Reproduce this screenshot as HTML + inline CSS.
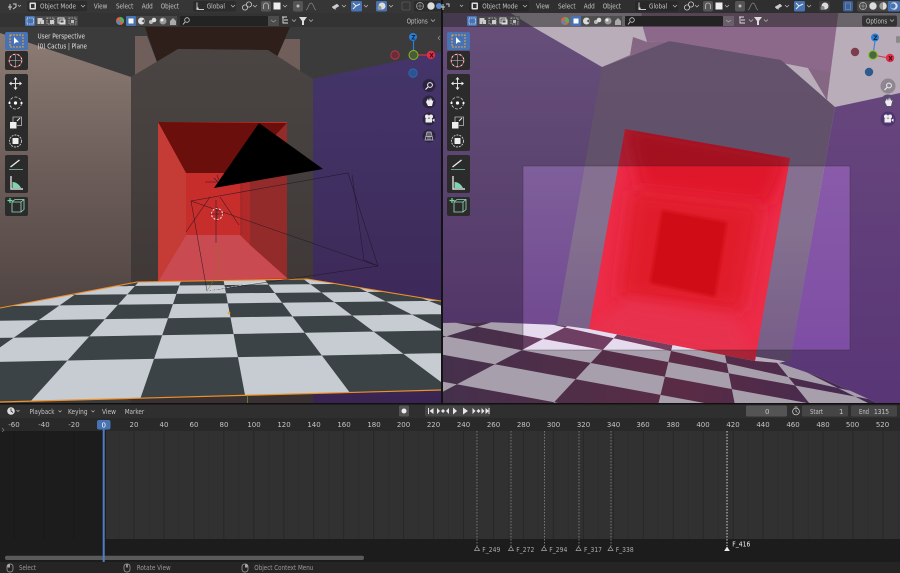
<!DOCTYPE html>
<html lang="en"><head><meta charset="utf-8"><title>Blender</title>
<style>html,body{margin:0;padding:0;background:#222;width:900px;height:573px;overflow:hidden}svg{display:block;filter:blur(.35px)}
text{font-family:"DejaVu Sans","Liberation Sans",sans-serif;font-size:7px;fill:#c4c4c4}</style></head><body>
<svg width="900" height="573" viewBox="0 0 900 573" xmlns="http://www.w3.org/2000/svg">
<defs>
<clipPath id="lv"><rect x="0" y="0" width="441" height="403"/></clipPath>
<clipPath id="rv"><rect x="443" y="0" width="457" height="403"/></clipPath>
<clipPath id="lf"><polygon points="0,308 137,282 307,279 441,301 441,390 0,402"/></clipPath>
<clipPath id="rf"><polygon points="443,323 485,322 559,325 589,329 755,361 779,363 820,377 877,403 443,403"/></clipPath>
<clipPath id="rq"><polygon points="625,129 790,158 755,361 589,329"/></clipPath>
<filter id="b8" x="-40%" y="-40%" width="180%" height="180%"><feGaussianBlur stdDeviation="9"/></filter>
<filter id="b6" x="-30%" y="-30%" width="160%" height="160%"><feGaussianBlur stdDeviation="6"/></filter>
<filter id="b1" x="-10%" y="-10%" width="120%" height="120%"><feGaussianBlur stdDeviation="1.200"/></filter>
<linearGradient id="lw" x1="0" y1="0" x2="0" y2="1"><stop offset="0" stop-color="#8c7c74"/><stop offset=".5" stop-color="#6b5c58"/><stop offset="1" stop-color="#4e4341"/></linearGradient>
<linearGradient id="cw" x1="0" y1="0" x2="0" y2="1"><stop offset="0" stop-color="#4a4543"/><stop offset="1" stop-color="#3a3232"/></linearGradient>
<linearGradient id="rw" x1="0" y1="0" x2="0" y2="1"><stop offset="0" stop-color="#44356a"/><stop offset="1" stop-color="#3a2552"/></linearGradient>
<linearGradient id="rlw" gradientUnits="userSpaceOnUse" x1="0" y1="0" x2="0" y2="340"><stop offset="0" stop-color="#8f6eaa"/><stop offset=".45" stop-color="#80619c"/><stop offset="1" stop-color="#70488f"/></linearGradient>
<linearGradient id="rcw" x1="0" y1="0" x2="0" y2="1"><stop offset="0" stop-color="#8a6f96"/><stop offset=".6" stop-color="#84708f"/><stop offset="1" stop-color="#765c88"/></linearGradient>
<linearGradient id="rrw" x1="0" y1="0" x2="0" y2="1"><stop offset="0" stop-color="#8e60ac"/><stop offset="1" stop-color="#7a4aa2"/></linearGradient>
<linearGradient id="rd" gradientUnits="userSpaceOnUse" x1="443" y1="0" x2="880" y2="0"><stop offset="0" stop-color="#5e4268"/><stop offset=".55" stop-color="#7c3c5e"/><stop offset="1" stop-color="#583a72"/></linearGradient>
<pattern id="grid" x="104" y="0" width="29.96" height="10" patternUnits="userSpaceOnUse"><rect x="-.5" width="1" height="10" fill="#272727"/><rect x="29.46" width="1" height="10" fill="#272727"/><rect x="14.5" width="1" height="10" fill="#2d2d2d"/></pattern>
<pattern id="grid2" x="104" y="0" width="29.96" height="10" patternUnits="userSpaceOnUse"><rect x="-.5" width="1" height="10" fill="#181818"/><rect x="29.46" width="1" height="10" fill="#181818"/></pattern>
<g id="tools">
<rect x="5" y="32" width="23" height="18" rx="2" fill="#4772b3"/>
<rect x="5" y="51" width="23" height="19" rx="2" fill="#2b2b2b"/>
<rect x="5" y="74" width="23" height="77" rx="2" fill="#2b2b2b"/>
<rect x="5" y="155" width="23" height="38" rx="2" fill="#2b2b2b"/>
<rect x="5" y="197" width="23" height="19" rx="2" fill="#2b2b2b"/>
<rect x="10" y="35" width="13" height="12" fill="none" stroke="#e8a24a" stroke-width="1" stroke-dasharray="2 1"/><path d="M14 37v7l2-1.700 3 0z" fill="#fff"/>
<circle cx="15.500" cy="60.500" r="6.300" fill="none" stroke="#e8e8e8" stroke-width="1" stroke-dasharray="2.500 2"/><circle cx="15.500" cy="60.500" r="6.300" fill="none" stroke="#d0454a" stroke-width="1" stroke-dasharray="2.500 2" stroke-dashoffset="2.500"/><path d="M15.500 55v11M10 60.500h11" stroke="#ccc" stroke-width=".5"/>
<path d="M15.500 79v9M11 83.500h9" stroke="#ddd" stroke-width="1"/><path d="M15.500 77l-2 2.500h4zM15.500 90l-2-2.500h4zM9 83.500l2.500-2v4zM22 83.500l-2.500-2v4z" fill="#eee"/>
<circle cx="15.500" cy="103" r="6" fill="none" stroke="#ccc" stroke-width=".8" stroke-dasharray="3 1.500"/><circle cx="15.500" cy="103" r="1.600" fill="#fff"/><circle cx="9.500" cy="103" r="1.100" fill="#fff"/><circle cx="21.500" cy="103" r="1.100" fill="#fff"/>
<rect x="10" y="122" width="6.500" height="6.500" fill="#eee"/><path d="M13 122v-5h8.500v8.500H17" fill="none" stroke="#bbb" stroke-width=".8"/><path d="M17 121l3-3" stroke="#eee" stroke-width="1"/>
<circle cx="15.500" cy="141" r="6" fill="none" stroke="#ccc" stroke-width=".9" stroke-dasharray="2 1"/><rect x="12.500" y="138" width="6" height="6" rx=".5" fill="#eee"/>
<path d="M10.500 167l9-7" stroke="#eee" stroke-width="1.300"/><path d="M9 169.500h14" stroke="#7ac2a0" stroke-width=".8"/>
<path d="M11 176v13h12" fill="none" stroke="#ddd" stroke-width="1.400"/><path d="M12.500 188v-6c4 0 7 3 8.500 6z" fill="#7fd6ae"/>
<path d="M12 202h9v10h-9zM12 202l3-2.500h9v10l-3 2.500M21 202l3-2.500" fill="none" stroke="#9adcc0" stroke-width=".8"/><path d="M10 198v5M7.500 200.500h5" stroke="#6fdc9e" stroke-width="1.200"/>
</g>
</defs>

<!-- LEFT VIEWPORT -->
<g clip-path="url(#lv)">
<rect width="441" height="403" fill="#3b3b3b"/>
<polygon points="135,36 147,36 157,62 178,49 135,76" fill="#6f5e5a"/>
<polygon points="285,39 300,39 300,72 277,57" fill="#6f5e5a"/>
<polygon points="145,27 290,27 277,57 268,50 178,49 157,62" fill="#2e1f1b"/>
<polygon points="0,33 131,77 131,320 0,320" fill="url(#lw)"/>
<polygon points="313,79 441,52 441,403 313,403" fill="url(#rw)"/>
<polygon points="131,77 178,49 268,50 313,79 313,403 131,403" fill="url(#cw)"/>
<!-- red room -->
<rect x="158" y="122" width="129" height="160" fill="#c9302c"/>
<polygon points="158,122 287,123 240,173 186,173" fill="#6a0f0b"/>
<polygon points="158,122 186,173 186,234 158,282" fill="#c53c36"/>
<polygon points="186,173 240,173 240,235 186,235" fill="#c72d2b"/>
<polygon points="240,173 250,162 250,245 240,235" fill="#b02a2a"/>
<polygon points="250,162 287,123 287,278 250,245" fill="#932b2a"/>
<polygon points="186,235 240,235 250,245 287,278 158,282" fill="#c94a50"/>
<rect x="240" y="173" width="3" height="62" fill="#a92828"/>
<!-- floor -->
<g clip-path="url(#lf)">
<rect x="0" y="270" width="441" height="135" fill="#c6ccd1"/>
<path fill="#3b4346" fill-rule="evenodd" d="M-10 362.100L450 352.900L450 390.200L-10 402.400Z M-10 320.900L450 314L450 330.300L-10 338.100Z M-10 295.700L450 291.100L450 300.700L-10 306.200Z M-10 270L450 270L450 282.800L-10 287.400Z M221.600 270L257.500 270L362.900 410L247.800 410Z M291.300 270L323.700 270L600.800 410L478.500 410Z M348.400 270L378 270L840 410L712.400 410Z M149.400 270L184.700 270L136.400 410L22.700 410Z M71.600 270L109.800 270L-89 410L-208 410Z"/>
</g>
<polyline points="0,308 137,282 307,279 441,301" fill="none" stroke="#f0902a" stroke-width="1.100"/>
<polyline points="0,402 441,390" fill="none" stroke="#f0902a" stroke-width="1.200"/>
<circle cx="229" cy="313" r="1.300" fill="#f0a030"/>
<path d="M247.500 395v8" stroke="#7a9a30" stroke-width=".7"/>
<!-- camera -->
<polygon points="259,123 323,169 214,188" fill="#000"/>
<g fill="none" stroke="#1e1428" stroke-width=".55" stroke-opacity=".85">
<polygon points="191,201 348,173 378,266 207,291"/>
<path d="M191 201L378 266M352 175L364 260L378 266M210 197L186 232M220 197L239 225M205 182H223M216 200V243M214 178L218 182M217 175L219 180"/>
</g>
<path d="M217 243L220 270L207 291" fill="none" stroke="#8a7a20" stroke-width=".5"/>
<path d="M207 291L266 281" stroke="#ddd" stroke-width=".6" stroke-dasharray="3 1"/>
<circle cx="217" cy="214" r="5.500" fill="none" stroke="#fff" stroke-width="1" stroke-dasharray="2 1.500"/>
<circle cx="217" cy="214" r="5.500" fill="none" stroke="#e04040" stroke-width="1" stroke-dasharray="2 1.500" stroke-dashoffset="2"/>
<path d="M210 214h14M217 207v14" stroke="#222" stroke-width=".5"/>
</g>

<!-- RIGHT VIEWPORT -->
<g clip-path="url(#rv)">
<rect x="443" width="457" height="403" fill="#fdeefd"/>
<polygon points="443,0 490,0 533,27 602,67 600,340 443,340" fill="url(#rlw)"/>
<polygon points="640,0 840,0 827,100 808,68 669,41 647,42 643,28" fill="#c191be"/>
<polygon points="633,37 647,42 669,41 602,67 630,55" fill="#b78cb4"/>
<polygon points="808,68 830,72 827,100" fill="#b78cb4"/>
<polygon points="835,107 900,93 900,403 877,403 820,377 779,363 790,360" fill="url(#rrw)"/>
<polygon points="602,67 669,41 781,60 827,100 835,107 790,362 557,325" fill="url(#rcw)"/>
<g clip-path="url(#rq)">
<rect x="580" y="120" width="220" height="250" fill="#ec2c48"/>
<polygon points="625,125 790,155 770,205 640,190" fill="#e0152a" filter="url(#b8)"/>
<polygon points="632,190 762,205 742,312 618,297" fill="#e01a2a" filter="url(#b8)"/>
<polygon points="589,332 630,300 735,318 755,365" fill="#e8324e" filter="url(#b6)"/>
<polygon points="662,210 727,222 715,297 650,283" fill="#d00e18" filter="url(#b1)"/>
</g>
<g clip-path="url(#rf)">
<rect x="443" y="315" width="457" height="90" fill="#e6dbee"/>
<path fill="url(#rd)" fill-rule="evenodd" d="M430 297.500L910 404L910 406.700L430 318Z M430 333.300L910 422L910 441L430 352.300Z M430 379.300L910 468L910 505L430 416Z M498.700 320L579 320L389 420L178.700 420Z M630.600 320L678.500 320L654.500 420L537.600 420Z M718 320L742.700 320L822.700 420L738 420Z M765.900 352L768 352L960 420L902 420Z"/>
</g>
<!-- passepartout -->
<path fill="#000" fill-opacity=".27" fill-rule="evenodd" d="M443 0H900V403H443ZM523 166V350H850V166Z"/>
<rect x="523" y="166" width="327" height="184" fill="none" stroke="#2e2a33" stroke-opacity=".55" stroke-width=".6"/>
</g>

<rect x="441" y="0" width="2" height="404" fill="#141414"/>

<!-- header rows -->
<rect x="0" y="0" width="441" height="13" fill="#363636"/>
<rect x="0" y="13" width="441" height="14" fill="#282828" fill-opacity=".4"/>
<rect x="443" y="0" width="457" height="13" fill="#2f2f2f"/>
<rect x="443" y="13" width="457" height="14" fill="#282828" fill-opacity=".55"/>

<!-- left header contents -->
<g>
<path d="M8 7h4M10 4v6M13 4h3v3M13 9l3-2" fill="none" stroke="#ccc" stroke-width="1"/><path d="M18 5l1.500 1.500L21 5" fill="none" stroke="#bbb" stroke-width=".7"/>
<rect x="27" y="1" width="60" height="10.500" rx="2" fill="#2c2c2c"/>
<rect x="29.500" y="2.500" width="6.500" height="7" rx="1" fill="#ddd"/><rect x="31" y="4" width="3.500" height="4" fill="#333"/>
<text x="40" y="8.300" textLength="36" lengthAdjust="spacingAndGlyphs">Object Mode</text><path d="M81 5l2 2 2-2" fill="none" stroke="#bbb" stroke-width=".7"/>
<text x="93.700" y="8.300" textLength="13.700" lengthAdjust="spacingAndGlyphs">View</text>
<text x="116" y="8.300" textLength="17.300" lengthAdjust="spacingAndGlyphs">Select</text>
<text x="141.700" y="8.300" textLength="11" lengthAdjust="spacingAndGlyphs">Add</text>
<text x="160.700" y="8.300" textLength="18.300" lengthAdjust="spacingAndGlyphs">Object</text>
<rect x="193" y="1" width="43" height="10.500" rx="2" fill="#2c2c2c"/>
<path d="M197 2.500v7h7" fill="none" stroke="#ccc" stroke-width=".9"/><circle cx="197.500" cy="8.500" r="1.200" fill="#ccc"/>
<text x="206.700" y="8.300" textLength="18.300" lengthAdjust="spacingAndGlyphs">Global</text><path d="M231 5l2 2 2-2" fill="none" stroke="#bbb" stroke-width=".7"/>
<circle cx="245" cy="7.500" r="2.600" fill="none" stroke="#ccc" stroke-width=".8"/><circle cx="249" cy="4.500" r="2.600" fill="none" stroke="#ccc" stroke-width=".8"/><path d="M253 5l2 2 2-2" fill="none" stroke="#bbb" stroke-width=".7"/>
<rect x="261" y="1" width="10" height="10.500" rx="2" fill="#555"/><path d="M263.500 9V5.500a2.500 2.500 0 015 0V9" fill="none" stroke="#aaa" stroke-width="1.100"/>
<rect x="273.500" y="2.500" width="7" height="7" fill="#eee"/><path d="M283 5l2 2 2-2" fill="none" stroke="#bbb" stroke-width=".7"/>
<rect x="293" y="1" width="10" height="10.500" rx="2" fill="#555"/><circle cx="298" cy="6" r="1.500" fill="#bbb"/>
<path d="M306 10c2 0 2.500-7 5-7s3 7 5 7" fill="none" stroke="#888" stroke-width=".7"/>
<path d="M332 7l5-3 2 2-5 3zM335 10l1-2" fill="#ccc" stroke="#ccc" stroke-width=".5"/><path d="M342 5l2 2 2-2" fill="none" stroke="#bbb" stroke-width=".7"/>
<rect x="351" y="1" width="11" height="10.500" rx="1.500" fill="#4772b3"/><path d="M353 3l3 3 4-2M353 9l3-3" fill="none" stroke="#eee" stroke-width="1"/><path d="M364 5l2 2 2-2" fill="none" stroke="#bbb" stroke-width=".7"/>
<rect x="376" y="1" width="11" height="10.500" rx="1.500" fill="#4772b3"/><circle cx="382" cy="6" r="3.500" fill="#ddd"/><circle cx="379.500" cy="8" r="2" fill="#999"/><path d="M389 5l2 2 2-2" fill="none" stroke="#bbb" stroke-width=".7"/>
<rect x="402" y="2" width="8" height="8" rx="1" fill="none" stroke="#5a5a5a" stroke-width=".8"/>
<rect x="414" y="1" width="27" height="10.500" rx="2" fill="#2c2c2c"/><circle cx="420" cy="6" r="3.500" fill="none" stroke="#aaa" stroke-width=".7"/><path d="M416.500 6h7M420 2.500v7" stroke="#aaa" stroke-width=".5"/><circle cx="431" cy="6" r="3.700" fill="#ddd"/><circle cx="439" cy="6" r="3" fill="#5a8ad0"/>
<!-- row 2 -->
<rect x="25" y="16" width="10" height="10" rx="1" fill="#4772b3"/><rect x="27" y="18" width="6.500" height="6" fill="none" stroke="#fff" stroke-width=".8" stroke-dasharray="1 .8"/>
<rect x="35" y="16" width="43" height="10" rx="1" fill="#4a4a4a"/>
<path d="M37.500 18h5v3.500h-2v2.500h-3zM41 20h3v4h-3z" fill="#ccc"/>
<rect x="47" y="18" width="7" height="6" fill="none" stroke="#ccc" stroke-width=".8" stroke-dasharray="1.500 1"/><rect x="50" y="20" width="4" height="4" fill="#ccc"/>
<rect x="58" y="18" width="6" height="5" fill="none" stroke="#ddd" stroke-width="1"/><rect x="60" y="20" width="5" height="4" fill="none" stroke="#ddd" stroke-width="1"/>
<rect x="69" y="18" width="7" height="6" fill="none" stroke="#bbb" stroke-width=".8" stroke-dasharray="1.500 1"/><rect x="71" y="20" width="3" height="3" fill="#bbb"/>
<circle cx="120" cy="21" r="4" fill="#e06040"/><path d="M120 17a4 4 0 013.500 6L120 21z" fill="#50b060"/><path d="M116.500 21a4 4 0 003.500 4l0-4z" fill="#4090d0"/>
<rect x="126" y="16" width="10" height="10" rx="1" fill="#4772b3"/><rect x="128.500" y="18.500" width="5" height="5" fill="#fff"/>
<rect x="136" y="16" width="41" height="10" fill="#484848"/>
<circle cx="141.500" cy="21" r="3.500" fill="#ddd"/><path d="M141.500 21l3-2v4z" fill="#555"/>
<circle cx="151" cy="22" r="2" fill="#bbb"/><circle cx="154" cy="20" r="2.300" fill="#ddd"/>
<circle cx="163" cy="21" r="3.500" fill="#999"/><circle cx="162" cy="20" r="1.500" fill="#eee"/>
<path d="M170 25v-4l3-3 3 3v4z" fill="#aaa"/>
<rect x="180" y="16" width="88" height="10" rx="1" fill="#232323"/><circle cx="187" cy="20" r="2.300" fill="none" stroke="#ccc" stroke-width=".8"/><path d="M185 22l-2 2.500" stroke="#ccc"/>
<rect x="268" y="16" width="11" height="10" fill="#4c4c4c"/><path d="M271 20l2.500 2 2.500-2" fill="none" stroke="#999" stroke-width=".7"/>
<path d="M282 17h5M284 20h4M284 23h4M283 17v6h1" fill="none" stroke="#ddd" stroke-width=".9"/><path d="M292 19.500l2 2 2-2" fill="none" stroke="#bbb" stroke-width=".7"/>
<path d="M299 17h8l-3 4v4h-2v-4z" fill="#ddd"/><path d="M309 19.500l2 2 2-2" fill="none" stroke="#bbb" stroke-width=".7"/>
<rect x="403" y="15.500" width="34" height="11" rx="2" fill="#333"/>
<text x="406.700" y="23.300" textLength="21" lengthAdjust="spacingAndGlyphs">Options</text><path d="M431 19.500l2 2 2-2" fill="none" stroke="#bbb" stroke-width=".7"/>
</g>

<!-- right header contents -->
<g>
<path d="M450 7h4M452 4v6M455 4h3v3" fill="none" stroke="#ccc" stroke-width="1" transform="translate(-9 0)"/><path d="M460 5l1.500 1.500L463 5" fill="none" stroke="#bbb" stroke-width=".7"/>
<rect x="469" y="1" width="60" height="10.500" rx="2" fill="#282828"/>
<rect x="471.500" y="2.500" width="6.500" height="7" rx="1" fill="#ddd"/><rect x="473" y="4" width="3.500" height="4" fill="#333"/>
<text x="482.300" y="8.300" textLength="35.500" lengthAdjust="spacingAndGlyphs">Object Mode</text><path d="M523 5l2 2 2-2" fill="none" stroke="#bbb" stroke-width=".7"/>
<text x="536" y="8.300" textLength="13.500" lengthAdjust="spacingAndGlyphs">View</text>
<text x="558" y="8.300" textLength="17.600" lengthAdjust="spacingAndGlyphs">Select</text>
<text x="583.700" y="8.300" textLength="11" lengthAdjust="spacingAndGlyphs">Add</text>
<text x="602.700" y="8.300" textLength="18.300" lengthAdjust="spacingAndGlyphs">Object</text>
<rect x="635" y="1" width="43" height="10.500" rx="2" fill="#282828"/>
<path d="M639 2.500v7h7" fill="none" stroke="#ccc" stroke-width=".9"/><circle cx="639.500" cy="8.500" r="1.200" fill="#ccc"/>
<text x="649" y="8.300" textLength="18.300" lengthAdjust="spacingAndGlyphs">Global</text><path d="M673 5l2 2 2-2" fill="none" stroke="#bbb" stroke-width=".7"/>
<circle cx="687" cy="7.500" r="2.600" fill="none" stroke="#ccc" stroke-width=".8"/><circle cx="691" cy="4.500" r="2.600" fill="none" stroke="#ccc" stroke-width=".8"/><path d="M695 5l2 2 2-2" fill="none" stroke="#bbb" stroke-width=".7"/>
<rect x="703" y="1" width="10" height="10.500" rx="2" fill="#555"/><path d="M705.500 9V5.500a2.500 2.500 0 015 0V9" fill="none" stroke="#aaa" stroke-width="1.100"/>
<rect x="715.500" y="2.500" width="7" height="7" fill="#eee"/><path d="M725 5l2 2 2-2" fill="none" stroke="#bbb" stroke-width=".7"/>
<rect x="735" y="1" width="10" height="10.500" rx="2" fill="#555"/><circle cx="740" cy="6" r="1.500" fill="#bbb"/>
<path d="M748 10c2 0 2.500-7 5-7s3 7 5 7" fill="none" stroke="#888" stroke-width=".7"/>
<path d="M775 7l5-3 2 2-5 3zM778 10l1-2" fill="#ccc" stroke="#ccc" stroke-width=".5"/><path d="M785 5l2 2 2-2" fill="none" stroke="#bbb" stroke-width=".7"/>
<rect x="794" y="1" width="11" height="10.500" rx="1.500" fill="#4772b3"/><path d="M796 3l3 3 4-2M796 9l3-3" fill="none" stroke="#eee" stroke-width="1"/><path d="M807 5l2 2 2-2" fill="none" stroke="#bbb" stroke-width=".7"/>
<rect x="819" y="1" width="11" height="10.500" rx="1.500" fill="#3c3c3c"/><circle cx="825" cy="6" r="3.500" fill="#ddd"/><circle cx="822.500" cy="8" r="2" fill="#888"/>
<rect x="843" y="1" width="10" height="10.500" rx="1.500" fill="#3d5f94"/><rect x="845.500" y="3" width="5" height="6.500" fill="none" stroke="#6d8ab8" stroke-width=".8"/>
<rect x="857" y="1" width="43" height="10.500" rx="2" fill="#444"/><circle cx="863" cy="6" r="3.500" fill="none" stroke="#bbb" stroke-width=".7"/><path d="M859.500 6h7M863 2.500v7" stroke="#bbb" stroke-width=".5"/><circle cx="873" cy="6" r="3.700" fill="#ddd"/><circle cx="883" cy="6" r="3.700" fill="#999"/><path d="M883 2.300a3.700 3.700 0 010 7.400z" fill="#ddd"/><rect x="888" y="1" width="12" height="10.500" rx="1.500" fill="#4772b3"/><circle cx="894" cy="6" r="3.700" fill="#ddd"/><circle cx="893" cy="6" r="2.600" fill="#4772b3"/>
<rect x="467" y="16" width="10" height="10" rx="1" fill="#4772b3"/><rect x="469" y="18" width="6.500" height="6" fill="none" stroke="#fff" stroke-width=".8" stroke-dasharray="1 .8"/>
<rect x="477" y="16" width="43" height="10" rx="1" fill="#4a4a4a" fill-opacity=".8"/>
<path d="M479.500 18h5v3.500h-2v2.500h-3zM483 20h3v4h-3z" fill="#ccc"/>
<rect x="489" y="18" width="7" height="6" fill="none" stroke="#ccc" stroke-width=".8" stroke-dasharray="1.500 1"/><rect x="492" y="20" width="4" height="4" fill="#ccc"/>
<rect x="500" y="18" width="6" height="5" fill="none" stroke="#ddd" stroke-width="1"/><rect x="502" y="20" width="5" height="4" fill="none" stroke="#ddd" stroke-width="1"/>
<rect x="511" y="18" width="7" height="6" fill="none" stroke="#bbb" stroke-width=".8" stroke-dasharray="1.500 1"/><rect x="513" y="20" width="3" height="3" fill="#bbb"/>
<circle cx="565" cy="21" r="4" fill="#e06040"/><path d="M565 17a4 4 0 013.500 6L565 21z" fill="#50b060"/><path d="M561.500 21a4 4 0 003.500 4l0-4z" fill="#4090d0"/>
<rect x="571" y="16" width="10" height="10" rx="1" fill="#4772b3"/><rect x="573.500" y="18.500" width="5" height="5" fill="#fff"/>
<rect x="581" y="16" width="41" height="10" fill="#484848" fill-opacity=".8"/>
<circle cx="586.500" cy="21" r="3.500" fill="#ddd"/><path d="M586.500 21l3-2v4z" fill="#555"/>
<circle cx="596" cy="22" r="2" fill="#bbb"/><circle cx="599" cy="20" r="2.300" fill="#ddd"/>
<circle cx="608" cy="21" r="3.500" fill="#999"/><circle cx="607" cy="20" r="1.500" fill="#eee"/>
<path d="M615 25v-4l3-3 3 3v4z" fill="#aaa"/>
<rect x="625" y="16" width="98" height="10" rx="1" fill="#232323"/><circle cx="632" cy="20" r="2.300" fill="none" stroke="#ccc" stroke-width=".8"/><path d="M630 22l-2 2.500" stroke="#ccc"/>
<rect x="723" y="16" width="11" height="10" fill="#6a5e6a"/><path d="M726 20l2.500 2 2.500-2" fill="none" stroke="#aaa" stroke-width=".7"/>
<path d="M739 17h5M741 20h4M741 23h4M740 17v6h1" fill="none" stroke="#ddd" stroke-width=".9"/><path d="M749 19.500l2 2 2-2" fill="none" stroke="#bbb" stroke-width=".7"/>
<path d="M754 17h8l-3 4v4h-2v-4z" fill="#ddd"/><path d="M764 19.500l2 2 2-2" fill="none" stroke="#bbb" stroke-width=".7"/>
<rect x="862" y="15.500" width="35" height="11" rx="2" fill="#333"/>
<text x="866" y="23.300" textLength="21.300" lengthAdjust="spacingAndGlyphs">Options</text><path d="M890 19.500l2 2 2-2" fill="none" stroke="#bbb" stroke-width=".7"/>
</g>

<!-- tools -->
<use href="#tools"/>
<use href="#tools" transform="translate(442 0)"/>
<text x="37.500" y="38.500" textLength="47.500" lengthAdjust="spacingAndGlyphs" style="fill:#e4e4e4">User Perspective</text>
<text x="37.500" y="48.500" textLength="49.500" lengthAdjust="spacingAndGlyphs" style="fill:#e4e4e4">(0) Cactus | Plane</text>

<!-- left gizmo -->
<path d="M413.500 55V41" stroke="#2a7fd6" stroke-width="1.200"/><path d="M413.500 55H428" stroke="#e03048" stroke-width="1.200"/>
<circle cx="395" cy="55" r="4.200" fill="#6e2a38" stroke="#c23a4c" stroke-width=".8"/>
<circle cx="413" cy="73" r="4.200" fill="#2a5590" stroke="#2f6cc0" stroke-width=".8"/>
<circle cx="413" cy="37" r="4" fill="#2a7fd6"/><text x="411.300" y="39.500" style="font-size:6px;font-weight:bold;fill:#10263f">Z</text>
<circle cx="431" cy="55" r="4.200" fill="#e03048"/><text x="429.200" y="57.500" style="font-size:6px;font-weight:bold;fill:#3c0a12">X</text>
<circle cx="413.500" cy="55" r="4.500" fill="#4c5a3a" stroke="#80c020" stroke-width="1"/>
<g fill="#2c2440">
<circle cx="429" cy="85.500" r="6.500"/><circle cx="429" cy="102" r="6.500"/><circle cx="429" cy="119" r="6.500"/><circle cx="429" cy="136" r="6.500"/></g>
<circle cx="430" cy="85" r="2.400" fill="none" stroke="#eee" stroke-width="1"/><path d="M428 87l-2.500 2.500" stroke="#eee" stroke-width="1.200"/>
<path d="M426 102l2 4h4l1.500-6-1.500 1v-3l-1 2.500v-3.500l-1 3.500v-3l-1 3.500-1-2.500z" fill="#eee"/>
<circle cx="427" cy="116.500" r="2" fill="#eee"/><circle cx="431" cy="116.500" r="2" fill="#eee"/><rect x="425.500" y="118.500" width="6.500" height="4" fill="#eee"/><path d="M432 120l2.500-1.500v3.500z" fill="#eee"/>
<path d="M425 140l2-8h4l2 8zM426 136.500h6M428 132v8M430 132v8" fill="none" stroke="#ccc" stroke-width=".7"/>
<path d="M440 36l-2 2 2 2" fill="none" stroke="#999" stroke-width=".6"/>

<!-- right gizmo -->
<path d="M873 55L875 41" stroke="#2a7fd6" stroke-width="1"/><path d="M873 55L886 57.500" stroke="#e03048" stroke-width="1"/>
<circle cx="855" cy="52" r="4.200" fill="#7c3c4e"/>
<circle cx="869" cy="72" r="4.200" fill="#2f5a8e"/>
<circle cx="875" cy="37.500" r="4" fill="#2a7fd6"/><text x="873.300" y="40" style="font-size:6px;font-weight:bold;fill:#10263f">Z</text>
<circle cx="890" cy="58" r="4.200" fill="#e03048"/><text x="888.200" y="60.500" style="font-size:6px;font-weight:bold;fill:#3c0a12">X</text>
<circle cx="873" cy="55" r="4.300" fill="#4c6640" stroke="#80c020" stroke-width="1"/>
<circle cx="888" cy="86" r="7.500" fill="#8e8690"/><circle cx="888" cy="102" r="7.500" fill="#5e4a74"/><circle cx="888" cy="119" r="7.500" fill="#4e3570"/>
<circle cx="889" cy="85.500" r="2.400" fill="none" stroke="#eee" stroke-width="1"/><path d="M887 87.500l-2.500 2.500" stroke="#eee" stroke-width="1.200"/>
<path d="M885 102l2 4h4l1.500-6-1.500 1v-3l-1 2.500v-3.500l-1 3.500v-3l-1 3.500-1-2.500z" fill="#eee"/>
<circle cx="886" cy="116.500" r="2" fill="#eee"/><circle cx="890" cy="116.500" r="2" fill="#eee"/><rect x="884.500" y="118.500" width="6.500" height="4" fill="#eee"/><path d="M891 120l2.500-1.500v3.500z" fill="#eee"/>
<rect x="896" y="36" width="4" height="7" rx="1.500" fill="#8a8a8a"/>

<!-- TIMELINE -->
<rect x="0" y="403" width="900" height="1.500" fill="#111"/>
<rect x="0" y="404.500" width="900" height="13.500" fill="#2f2f2f"/>
<rect x="0" y="418" width="900" height="13" fill="#292929"/>
<rect x="0" y="431" width="900" height="108" fill="#1c1c1c"/>
<rect x="0" y="431" width="106" height="108" fill="url(#grid2)"/>
<rect x="106" y="431" width="794" height="108" fill="#313131"/>
<rect x="106" y="431" width="794" height="108" fill="url(#grid)"/>
<rect x="0" y="539" width="900" height="23" fill="#1c1c1c"/>
<rect x="0" y="562" width="900" height="11" fill="#242424"/>
<rect x="5" y="555.700" width="359" height="4.300" rx="2" fill="#5a5a5a"/>

<circle cx="11" cy="411" r="3.800" fill="#ddd"/><path d="M11 408.500v2.500l2 1.500" fill="none" stroke="#333" stroke-width=".9"/><path d="M16.500 410l1.500 1.500 1.500-1.500" fill="none" stroke="#bbb" stroke-width=".7"/>
<text x="29.500" y="414" textLength="25" lengthAdjust="spacingAndGlyphs">Playback</text><path d="M58.500 410.500l1.500 1.500 1.500-1.500" fill="none" stroke="#bbb" stroke-width=".7"/>
<text x="68" y="414" textLength="19.500" lengthAdjust="spacingAndGlyphs">Keying</text><path d="M91.500 410.500l1.500 1.500 1.500-1.500" fill="none" stroke="#bbb" stroke-width=".7"/>
<text x="102" y="414" textLength="14" lengthAdjust="spacingAndGlyphs">View</text>
<text x="124.700" y="414" textLength="19.500" lengthAdjust="spacingAndGlyphs">Marker</text>
<rect x="399" y="405.500" width="10" height="11" rx="1.500" fill="#545454"/><circle cx="404" cy="411" r="2.500" fill="#eee"/>
<rect x="425" y="405.500" width="65" height="11" rx="1.500" fill="#454545"/>
<g fill="#e8e8e8"><path d="M428 408v6h1v-6zM433.500 408v6l-4-3z"/><path d="M440 411l-3-3v6zM441 411l2-2 2 2-2 2z M446 411l3-3v6z"/><path d="M457 411l-4-3.500v7z"/><path d="M463 407.500v7l5-3.500z"/><path d="M474 408v6l3-3zM478 411l2-2 2 2-2 2z M483 408v6l3-3z" transform="translate(-1.500 0)"/><path d="M486 408v6l3.500-3zM489 408v6h1v-6z" transform="translate(-.5 0)"/></g>
<rect x="746" y="405.500" width="41" height="11" rx="1.500" fill="#545454"/><text x="765" y="414">0</text>
<circle cx="796" cy="411.500" r="3.400" fill="none" stroke="#ccc" stroke-width=".8"/><path d="M796 409.500v2l1.500 1M794.500 407h3" fill="none" stroke="#ccc" stroke-width=".7"/>
<rect x="802" y="405.500" width="46" height="11" rx="1.500" fill="#454545"/>
<text x="810" y="414" textLength="13" lengthAdjust="spacingAndGlyphs">Start</text><text x="839" y="414">1</text>
<rect x="851" y="405.500" width="46" height="11" rx="1.500" fill="#454545"/>
<text x="859" y="414" textLength="10" lengthAdjust="spacingAndGlyphs">End</text><text x="874" y="414" textLength="15" lengthAdjust="spacingAndGlyphs">1315</text>

<g>
<text x="14" y="427" text-anchor="middle">-60</text><text x="44" y="427" text-anchor="middle">-40</text><text x="74" y="427" text-anchor="middle">-20</text>
<text x="134" y="427" text-anchor="middle">20</text><text x="164" y="427" text-anchor="middle">40</text><text x="194" y="427" text-anchor="middle">60</text><text x="224" y="427" text-anchor="middle">80</text>
<text x="254" y="427" text-anchor="middle">100</text><text x="284" y="427" text-anchor="middle">120</text><text x="314" y="427" text-anchor="middle">140</text><text x="344" y="427" text-anchor="middle">160</text><text x="374" y="427" text-anchor="middle">180</text><text x="403.500" y="427" text-anchor="middle">200</text><text x="433.500" y="427" text-anchor="middle">220</text><text x="463.500" y="427" text-anchor="middle">240</text><text x="493.500" y="427" text-anchor="middle">260</text><text x="523.500" y="427" text-anchor="middle">280</text><text x="553.500" y="427" text-anchor="middle">300</text><text x="583.500" y="427" text-anchor="middle">320</text><text x="613.500" y="427" text-anchor="middle">340</text><text x="643" y="427" text-anchor="middle">360</text><text x="673" y="427" text-anchor="middle">380</text><text x="703" y="427" text-anchor="middle">400</text><text x="733" y="427" text-anchor="middle">420</text><text x="763" y="427" text-anchor="middle">440</text><text x="793" y="427" text-anchor="middle">460</text><text x="823" y="427" text-anchor="middle">480</text><text x="852.500" y="427" text-anchor="middle">500</text><text x="882.500" y="427" text-anchor="middle">520</text>
</g>
<path d="M2 428l2 2-2 2" fill="none" stroke="#888" stroke-width=".6"/>

<!-- markers -->
<g stroke="#8a8a8a" stroke-width=".8" stroke-dasharray="1.500 1.500">
<path d="M477 431V546M511 431V546M544.500 431V546M579 431V546M611 431V546"/></g>
<path d="M727 431V546" stroke="#e6e6e6" stroke-width=".9" stroke-dasharray="1.500 1.500"/>
<g fill="none" stroke="#a8a8a8" stroke-width=".7"><path d="M477 546.500l2.500 4h-5zM511 546.500l2.500 4h-5zM544 546.500l2.500 4h-5zM578.500 546.500l2.500 4h-5zM610.500 546.500l2.500 4h-5z"/></g>
<path d="M727 546.500l2.800 4.500h-5.600z" fill="#eee"/>
<g>
<text x="482.300" y="552" textLength="18" lengthAdjust="spacingAndGlyphs" style="fill:#aaa">F_249</text>
<text x="516.300" y="552" textLength="18" lengthAdjust="spacingAndGlyphs" style="fill:#aaa">F_272</text>
<text x="549.300" y="552" textLength="18" lengthAdjust="spacingAndGlyphs" style="fill:#aaa">F_294</text>
<text x="584" y="552" textLength="18" lengthAdjust="spacingAndGlyphs" style="fill:#aaa">F_317</text>
<text x="615.700" y="552" textLength="18" lengthAdjust="spacingAndGlyphs" style="fill:#aaa">F_338</text>
<text x="732.300" y="546.500" textLength="18" lengthAdjust="spacingAndGlyphs" style="fill:#eee">F_416</text>
</g>

<!-- playhead -->
<rect x="102.700" y="428" width="2" height="134" fill="#4f7dc4"/>
<rect x="97" y="420" width="13.500" height="9.500" rx="2" fill="#4772b3"/><text x="103.700" y="427.500" text-anchor="middle" style="fill:#fff">0</text>

<!-- status bar -->
<g fill="none" stroke="#aaa" stroke-width=".7">
<rect x="7" y="564" width="6" height="8" rx="2.500"/><rect x="124" y="564" width="6" height="8" rx="2.500"/><rect x="242" y="564" width="6" height="8" rx="2.500"/>
</g>
<rect x="7.500" y="564.500" width="2.500" height="3" fill="#aaa"/><rect x="126.200" y="564.500" width="1.600" height="3" fill="#aaa"/><rect x="245" y="564.500" width="2.500" height="3" fill="#aaa"/>
<text x="19" y="570" textLength="17" lengthAdjust="spacingAndGlyphs" style="fill:#9a9a9a">Select</text>
<text x="136.700" y="570" textLength="34" lengthAdjust="spacingAndGlyphs" style="fill:#9a9a9a">Rotate View</text>
<text x="254.300" y="570" textLength="59" lengthAdjust="spacingAndGlyphs" style="fill:#9a9a9a">Object Context Menu</text>
</svg>
</body></html>
